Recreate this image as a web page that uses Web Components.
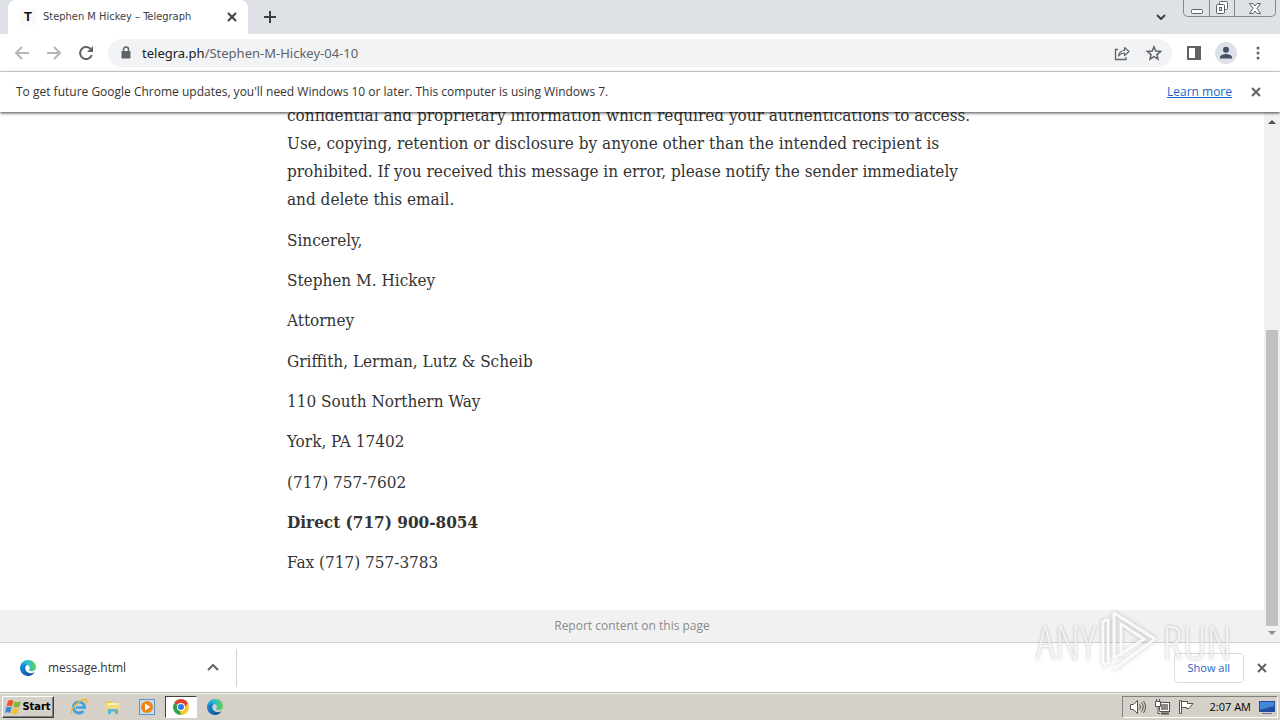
<!DOCTYPE html>
<html lang="en">
<head>
<meta charset="utf-8">
<title>Stephen M Hickey – Telegraph</title>
<style>
  body {
    margin: 0;
    font-family: "Open Sans", "Noto Sans", sans-serif;
    font-size: 12px;
    line-height: 16px;
    color: #333;
  }
</style>
</head>
<body>
<desktop-screen>
  <tab-strip>
    <browser-tab label="Stephen M Hickey – Telegraph"></browser-tab>
  </tab-strip>
  <browser-toolbar host="telegra.ph" path="/Stephen-M-Hickey-04-10"></browser-toolbar>
  <info-bar>
    To get future Google Chrome updates, you'll need Windows 10 or later. This computer is using Windows 7.
    <a slot="link" href="#learn">Learn more</a>
  </info-bar>
  <page-viewport>
    <letter-article>
      <section>
        <p>confidential and proprietary information which required your authentications to access.<br>
        Use, copying, retention or disclosure by anyone other than the intended recipient is<br>
        prohibited. If you received this message in error, please notify the sender immediately<br>
        and delete this email.</p>
      </section>
      <section>
        <p>Sincerely,</p>
        <p>Stephen M. Hickey</p>
        <p>Attorney</p>
      </section>
      <section>
        <p>Griffith, Lerman, Lutz &amp; Scheib</p>
        <p>110 South Northern Way</p>
        <p>York, PA 17402</p>
      </section>
      <section>
        <p>(717) 757-7602</p>
        <p><strong>Direct (717) 900-8054</strong></p>
        <p>Fax (717) 757-3783</p>
      </section>
    </letter-article>
  </page-viewport>
  <download-shelf file="message.html"></download-shelf>
  <task-bar time="2:07 AM"></task-bar>
  <brand-watermark></brand-watermark>
</desktop-screen>

<script>
// shared glyphs
const icons = {
  close: '<svg width="10" height="10" viewBox="0 0 10 10"><path d="M1 1l8 8M9 1l-8 8" fill="none" stroke="currentColor" stroke-width="2"/></svg>',
  edge: `<svg width="18" height="18" viewBox="0 0 18 18">
    <defs>
      <linearGradient id="top" x1="0" y1="0" x2="1" y2="0"><stop offset="0" stop-color="#1b9de2"/><stop offset=".5" stop-color="#2fc0c9"/><stop offset="1" stop-color="#62d050"/></linearGradient>
      <linearGradient id="low" x1="0" y1="0" x2="1" y2="1"><stop offset="0" stop-color="#1a8fdc"/><stop offset="1" stop-color="#114a8b"/></linearGradient>
    </defs>
    <path d="M1 9c0-5 4-8 8-8 5 0 8 3.500 8 7 0 3-2 4.300-4.500 4.300-2 0-2.800-.8-2.300-1.500 1-1.200.8-3-.4-4C7.500 4.700 3 5.500 1 9z" fill="url(#top)"/>
    <path d="M1 9c1.300-3.500 5-4.500 7-3.300C6 7 5.700 9.500 7 11.700c1.600 2.600 5.600 3.400 8.700 1.300C14.300 15.700 11.800 17 9 17c-4.700 0-8-3.700-8-8z" fill="url(#low)"/>
  </svg>`,
};

class BaseElement extends HTMLElement {
  constructor() {
    super();
    this.sroot = this.attachShadow({ mode: 'open' });
  }

  connectedCallback() {
    this.sroot.innerHTML = `
      <style>
        :host, *, *::after { box-sizing: border-box; }
        button {
          display: inline-flex;
          align-items: center;
          justify-content: center;
          flex: none;
          margin: 0;
          padding: 0;
          border: 0;
          background: none;
          color: inherit;
          font: inherit;
        }
        svg { display: block; flex: none; }
      </style>
      ${this.render()}`;
  }
}

class DesktopScreen extends BaseElement {
  render() {
    return `
      <style>
        :host {
          display: flex;
          flex-direction: column;
          height: 100vh;
          position: relative;
          overflow: hidden;
          background: #fff;
        }
      </style>
      <slot></slot>`;
  }
}

class TabStrip extends BaseElement {
  render() {
    return `
      <style>
        :host {
          display: flex;
          flex: none;
          height: 34px;
          padding-left: 8px;
          background: #dee1e6;
          color: #3c4043;
        }
        .new { width: 28px; margin-left: 8px; }
        .search { width: 28px; margin-left: auto; margin-right: 8px; }
        .controls {
          display: flex;
          height: 17px;
          margin-right: 4px;
          border: 1px solid #85888f;
          border-top: 0;
          border-radius: 0 0 5px 5px;
          color: #5c6068;
        }
        .controls button { width: 25px; }
        .controls button + button { border-left: 1px solid #85888f; }
        .controls button:last-child { width: 41px; }
      </style>
      <slot></slot>
      <button class="new" aria-label="New tab"><svg width="12" height="12" viewBox="0 0 12 12"><path d="M6 0v12M0 6h12" stroke="currentColor" stroke-width="2"/></svg></button>
      <button class="search" aria-label="Search tabs"><svg width="10" height="6" viewBox="0 0 10 6"><path d="M1 1l4 4 4-4" fill="none" stroke="currentColor" stroke-width="2"/></svg></button>
      <div class="controls">
        <button aria-label="Minimize"><svg width="14" height="14" viewBox="0 0 14 14"><rect x="1.500" y="8.500" width="11" height="4" rx="1" fill="#fff" stroke="currentColor"/></svg></button>
        <button aria-label="Restore"><svg width="14" height="14" viewBox="0 0 14 14"><g fill="#fff" stroke="currentColor"><rect x="4.500" y=".5" width="8" height="8" rx="1"/><rect x="1.500" y="3.500" width="8" height="9" rx="1"/><rect x="4.500" y="6.500" width="2" height="3"/></g></svg></button>
        <button aria-label="Close"><svg width="14" height="14" viewBox="0 0 14 14"><path d="M1.500 2.500h3.500l2 2.500 2-2.500h3.500L9 7.500l3.500 5H9L7 10l-2 2.500H1.500L5 7.500z" fill="#fff" stroke="currentColor"/></svg></button>
      </div>`;
  }
}

class BrowserTab extends BaseElement {
  render() {
    return `
      <style>
        :host {
          display: flex;
          align-items: center;
          width: 240px;
          padding: 0 11px 0 12px;
          border-radius: 8px 8px 0 0;
          background: #fff;
          font-family: "DejaVu Sans Condensed", "DejaVu Sans", sans-serif;
          font-stretch: condensed;
          font-size: 11px;
        }
        .icon {
          width: 16px;
          height: 16px;
          margin-right: 7px;
          background: #fafafa;
          color: #111;
          font-family: "Liberation Sans", sans-serif;
          font-size: 13px;
          font-weight: bold;
          text-align: center;
        }
        .label { flex: 1; white-space: nowrap; }
      </style>
      <span class="icon">T</span>
      <span class="label">${this.getAttribute('label')}</span>
      <button aria-label="Close tab">${icons.close}</button>`;
  }
}

class BrowserToolbar extends BaseElement {
  render() {
    return `
      <style>
        :host {
          display: flex;
          align-items: center;
          flex: none;
          height: 38px;
          padding: 0 6px;
          border-bottom: 1px solid #dadce0;
          color: #5f6368;
        }
        button { width: 32px; height: 32px; }
        .dim { color: #b4b6b9; }
        .address {
          display: flex;
          align-items: center;
          flex: 1;
          height: 28px;
          margin: 0 6px;
          padding: 0 2px 0 12px;
          border-radius: 14px;
          background: #f1f3f4;
        }
        .url {
          flex: 1;
          margin-left: 10px;
          font-family: "Noto Sans", sans-serif;
          font-size: 13px;
          line-height: 20px;
          white-space: nowrap;
        }
        .url b { color: #202124; font-weight: normal; }
      </style>
      <button class="dim" aria-label="Back"><svg width="16" height="16" viewBox="0 0 16 16"><path d="M15 8H2M8 2L2 8l6 6" fill="none" stroke="currentColor" stroke-width="2"/></svg></button>
      <button class="dim" aria-label="Forward"><svg width="16" height="16" viewBox="0 0 16 16"><path d="M1 8h13M8 2l6 6-6 6" fill="none" stroke="currentColor" stroke-width="2"/></svg></button>
      <button aria-label="Reload"><svg width="16" height="16" viewBox="0 0 16 16"><path d="M13.800 10A6 6 0 1 1 12.300 3.800" fill="none" stroke="currentColor" stroke-width="2"/><path d="M15 1v6H9z" fill="currentColor"/></svg></button>
      <div class="address">
        <svg width="12" height="14" viewBox="0 0 12 14"><rect x="1.500" y="5" width="9" height="7.500" rx="1" fill="currentColor"/><path d="M3.500 6V3.500a2.500 2.500 0 0 1 5 0V6" fill="none" stroke="currentColor" stroke-width="1.500"/></svg>
        <span class="url"><b>${this.getAttribute('host')}</b>${this.getAttribute('path')}</span>
        <button aria-label="Share"><svg width="16" height="16" viewBox="0 0 16 16"><path d="M4 4.500H1.500V14.500H12V12" fill="none" stroke="currentColor" stroke-width="1.300"/><path d="M4.500 11c.5-3.500 2.500-5.500 6-5.500V2.500L15 6.500l-4.500 4V8c-2.500 0-4.500.7-6 3z" fill="none" stroke="currentColor" stroke-width="1.200" stroke-linejoin="round"/></svg></button>
        <button aria-label="Bookmark"><svg width="16" height="16" viewBox="0 0 16 16"><path d="M8 1.800l1.800 4.300 4.700.4-3.500 3.100 1 4.500L8 11.700l-4 2.400 1-4.500L1.500 6.500l4.700-.4z" fill="none" stroke="currentColor" stroke-width="1.500"/></svg></button>
      </div>
      <button aria-label="Side panel"><svg width="14" height="14" viewBox="0 0 14 14"><path d="M1 1h12v12H1z" fill="none" stroke="currentColor" stroke-width="2"/><path d="M8 1h6v12H8z" fill="currentColor"/></svg></button>
      <button aria-label="Profile"><svg width="22" height="22" viewBox="0 0 22 22"><circle cx="11" cy="11" r="11" fill="#dde1e8"/><circle cx="11" cy="7.800" r="3" fill="#474f6b"/><path d="M5 16.500v-1.300C5 13 9 12 11 12s6 1 6 3.200v1.300z" fill="#474f6b"/></svg></button>
      <button aria-label="Menu"><svg width="4" height="14" viewBox="0 0 4 14" fill="currentColor"><circle cx="2" cy="2" r="1.500"/><circle cx="2" cy="7" r="1.500"/><circle cx="2" cy="12" r="1.500"/></svg></button>`;
  }
}

class InfoBar extends BaseElement {
  render() {
    return `
      <style>
        :host {
          display: flex;
          align-items: center;
          flex: none;
          height: 40px;
          padding: 0 19px 0 16px;
          background: #fff;
          box-shadow: 0 1px 3px rgba(0, 0, 0, .75);
          position: relative;
        }
        .message { flex: 1; }
        ::slotted(a) { color: #1a67c9; }
        button { margin-left: 19px; color: #5f6368; }
      </style>
      <span class="message"><slot></slot></span>
      <slot name="link"></slot>
      <button aria-label="Dismiss">${icons.close}</button>`;
  }
}

class PageViewport extends BaseElement {
  render() {
    return `
      <style>
        :host {
          display: flex;
          flex: 1;
          min-height: 0;
          background: #fff;
        }
        /* the page is scrolled to its end, so content hangs from the bottom */
        .page {
          display: flex;
          flex-direction: column;
          justify-content: flex-end;
          flex: 1;
          min-width: 0;
          overflow: hidden;
        }
        footer {
          flex: none;
          padding: 8px 0;
          background: #f1f1f1;
          text-align: center;
        }
        footer a { color: #8a8a8a; text-decoration: none; }
        .scrollbar {
          display: flex;
          flex-direction: column;
          align-items: center;
          width: 16px;
          padding: 8px 0 7px;
          background: #f1f1f1;
          color: #505050;
        }
        .thumb { width: 12px; height: 296px; margin: auto 0 5px; background: #c1c1c1; }
      </style>
      <div class="page">
        <slot></slot>
        <footer><a href="#report">Report content on this page</a></footer>
      </div>
      <div class="scrollbar">
        <svg width="8" height="4" viewBox="0 0 8 4"><path d="M0 4l4-4 4 4z" fill="currentColor"/></svg>
        <div class="thumb"></div>
        <svg width="8" height="4" viewBox="0 0 8 4"><path d="M0 0l4 4 4-4z" fill="#8c8c8c"/></svg>
      </div>`;
  }
}

const letterTemplate = document.createElement('template');
letterTemplate.innerHTML = `
  <style>
    :host {
      display: block;
      box-sizing: border-box;
      width: 100%;
      max-width: 732px;
      margin: 0 auto;
      padding: 0 21px 34px;
      color: #333;
      font-family: "DejaVu Serif Condensed", "DejaVu Serif", serif;
      font-stretch: condensed;
      font-size: 17px;
      line-height: 28px;
      white-space: nowrap;
    }
    section { margin-top: 13px; }
    p { margin: 12px 0 0; }
    p:first-child { margin-top: 0; }
  </style>
  <article></article>
`;

class LetterArticle extends HTMLElement {
  constructor() {
    super();
    this.sroot = this.attachShadow({ mode: 'open' });
    this.sroot.append(letterTemplate.content.cloneNode(true));
  }

  connectedCallback() {
    this.sroot.querySelector('article').append(...this.children);
  }
}

class DownloadShelf extends BaseElement {
  render() {
    return `
      <style>
        :host {
          display: flex;
          align-items: center;
          flex: none;
          height: 50px;
          padding-right: 13px;
          border-top: 1px solid #d0d2d5;
          background: #fff;
        }
        .item {
          display: flex;
          align-items: center;
          width: 237px;
          height: 38px;
          padding: 0 17px 0 19px;
          border-right: 1px solid #d0d2d5;
        }
        .name { flex: 1; margin-left: 11px; }
        .item button, .close { color: #5f6368; }
        .all {
          height: 30px;
          margin-left: auto;
          padding: 0 13px;
          border: 1px solid #dadce0;
          border-radius: 4px;
          color: #1a67c9;
          font-size: 11px;
        }
        .close { margin-left: 13px; }
      </style>
      <div class="item">
        ${icons.edge}
        <span class="name">${this.getAttribute('file')}</span>
        <button aria-label="Options"><svg width="12" height="7" viewBox="0 0 12 7"><path d="M1 6l5-5 5 5" fill="none" stroke="currentColor" stroke-width="2"/></svg></button>
      </div>
      <button class="all">Show all</button>
      <button class="close" aria-label="Close downloads">${icons.close}</button>`;
  }
}

class TaskBar extends BaseElement {
  render() {
    return `
      <style>
        :host {
          display: flex;
          align-items: center;
          flex: none;
          height: 28px;
          padding: 0 2px;
          border-top: 1px solid #bab7b0;
          background: #d5d0c8;
          box-shadow: inset 0 1px #f5f3ef;
          color: #000;
        }
        .start {
          width: 52px;
          height: 22px;
          border: 1px solid;
          border-color: #fff #404040 #404040 #fff;
          box-shadow: inset -1px -1px #808080;
          font-family: "DejaVu Sans Condensed", "DejaVu Sans", sans-serif;
          font-stretch: condensed;
          font-size: 11px;
          font-weight: bold;
        }
        nav { display: flex; align-items: center; margin-left: 9px; gap: 2px; }
        nav button { width: 32px; height: 22px; }
        nav .active {
          background: #fff;
          border: 1px solid;
          border-color: #404040 #fff #fff #404040;
        }
        .tray {
          display: flex;
          align-items: center;
          height: 22px;
          margin-left: auto;
          padding: 0 2px 0 6px;
          gap: 8px;
          border: 1px solid;
          border-color: #808080 #fff #fff #808080;
          color: #55524d;
        }
        time {
          margin: 0 0 0 8px;
          color: #000;
          font-size: 11px;
        }
      </style>
      <button class="start">
        <svg width="17" height="16" viewBox="0 0 17 16"><path d="M3 2c2-1.500 4-1 5.500 0L7 7.500C5.500 6.500 4 6.500 1.500 7.500z" fill="#ec5a2b"/><path d="M9.500 2.500c2 1 4 1 6.500-.5L14.500 7.500c-2 1.200-4 1.200-6 .2z" fill="#7db83a"/><path d="M1.200 8.500c2-1 4-1 5.500 0L5.200 14c-1.500-1-3.500-1-5.200 0z" fill="#3f86cf"/><path d="M8 9c2 1 4 1 6-.2L12.500 14c-2 1.200-4 1.200-6 .2z" fill="#f6bd2a"/></svg>
        Start
      </button>
      <nav>
        <button aria-label="Internet Explorer"><svg width="18" height="18" viewBox="0 0 18 18"><circle cx="9" cy="9.500" r="5.500" fill="none" stroke="#3fa3e2" stroke-width="3"/><path d="M6 9.500h9" stroke="#3fa3e2" stroke-width="2.500"/><path d="M11 11h7v2.500h-4z" fill="#d5d0c8"/><path d="M2 16C-1 12 10 1 15.500 1.500c2 .3 1.500 2.500.5 4" fill="none" stroke="#efb731" stroke-width="1.500"/></svg></button>
        <button aria-label="Explorer"><svg width="18" height="18" viewBox="0 0 18 18"><path d="M2 3h5l1 1.500h7.500V14H2z" fill="#e8c765"/><path d="M3 5h12v7H3z" fill="#fbf0b4"/><path d="M2 7h14v6H2z" fill="#f2d981"/><path d="M4 16v-5h10v5h-3v-2.500H7V16z" fill="#58b5dc"/></svg></button>
        <button aria-label="Media Player"><svg width="18" height="18" viewBox="0 0 18 18"><rect x="1.500" y="1.500" width="15" height="15" fill="#c9def0" stroke="#5d95c8"/><circle cx="9" cy="9" r="6" fill="#f08418"/><path d="M7 5.500L12.500 9 7 12.500z" fill="#fff"/></svg></button>
        <button class="active" aria-label="Chrome"><svg width="16" height="16" viewBox="0 0 16 16"><path d="M8 8L1.100 4A8 8 0 0 1 14.900 4z" fill="#e0422f"/><path d="M8 8L14.900 4A8 8 0 0 1 8 16z" fill="#f9c927"/><path d="M8 8V16A8 8 0 0 1 1.100 4z" fill="#2fa24c"/><path d="M8 4h7l-3 4z" fill="#e0422f"/><path d="M11.500 9L8 16l-1-4z" fill="#f9c927"/><circle cx="8" cy="8" r="4" fill="#fff"/><circle cx="8" cy="8" r="3" fill="#3578e5"/></svg></button>
        <button aria-label="Edge">${icons.edge}</button>
      </nav>
      <div class="tray">
        <svg width="17" height="16" viewBox="0 0 17 16" fill="none" stroke="currentColor"><path d="M1.500 5.500h3l4-4v13l-4-4h-3z" fill="#fff"/><path d="M10.500 5.500q2 2.500 0 5M12.500 3.500q3.500 4.500 0 9M14.500 2q4 6 0 12"/></svg>
        <svg width="16" height="16" viewBox="0 0 16 16" stroke="currentColor"><rect x="5.500" y="3.500" width="10" height="9" fill="#fff"/><path d="M7 5h7v6H7z" fill="#8b8983" stroke="none"/><path d="M7 14.500h8" stroke-width="2"/><path d="M1.500 2.500h5v5h-5zM2.500 0v2M5.500 0v2M4 8v6.500h2" fill="#fff"/></svg>
        <svg width="16" height="16" viewBox="0 0 16 16" fill="#fff" stroke="currentColor"><path d="M1.500 1.500h2v13h-2z"/><path d="M3.500 2.500h6v2h5.500l-2 2.500-2 2.500H8.500v-1h-5z"/></svg>
        <time>${this.getAttribute('time')}</time>
        <svg width="16" height="16" viewBox="0 0 16 16"><rect y="2" width="16" height="11" fill="#1d4f9d"/><path d="M1 3h14v4L1 11z" fill="#4586d6"/><path d="M3 14.500h10" stroke="#5d7898"/></svg>
      </div>`;
  }
}

class BrandWatermark extends BaseElement {
  render() {
    return `
      <style>
        :host {
          display: flex;
          align-items: center;
          gap: 4px;
          position: absolute;
          right: 48px;
          bottom: 46px;
          color: rgba(255, 255, 255, .75);
          font-family: "Open Sans Condensed Light", "Open Sans Condensed", "Open Sans", sans-serif;
          font-stretch: condensed;
          font-size: 48px;
          font-weight: 300;
          line-height: 32px;
          text-shadow: 0 0 3px rgba(0, 0, 0, .25);
          pointer-events: none;
        }
        svg { filter: drop-shadow(0 0 2px rgba(0, 0, 0, .25)); }
      </style>
      <span>ANY</span>
      <svg width="58" height="64" viewBox="0 0 58 64" fill="none" stroke="#fff" stroke-opacity=".85" stroke-width="3" stroke-linejoin="round">
        <path d="M14 26V3l41 26-41 30"/>
        <path d="M14 26v22l30-19-23-15v32"/>
        <path d="M7 9L3 12v40l4 4M8 9v45"/>
      </svg>
      <span>RUN</span>`;
  }
}

customElements.define('desktop-screen', DesktopScreen);
customElements.define('tab-strip', TabStrip);
customElements.define('browser-tab', BrowserTab);
customElements.define('browser-toolbar', BrowserToolbar);
customElements.define('info-bar', InfoBar);
customElements.define('page-viewport', PageViewport);
customElements.define('letter-article', LetterArticle);
customElements.define('download-shelf', DownloadShelf);
customElements.define('task-bar', TaskBar);
customElements.define('brand-watermark', BrandWatermark);
</script>
</body>
</html>
